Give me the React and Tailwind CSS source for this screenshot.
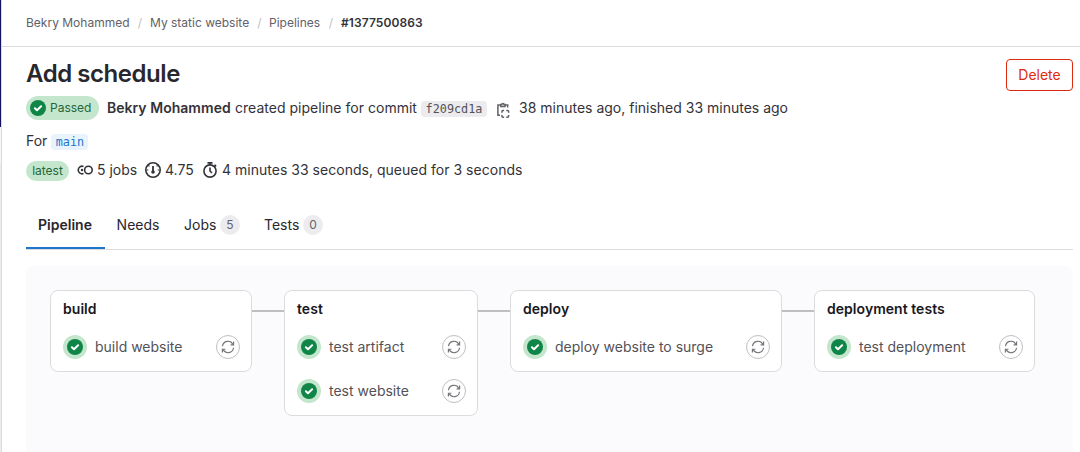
const font = "font-['Inter','Liberation_Sans',sans-serif]";

function Check({ size }) {
  return (
    <svg width={size} height={size} viewBox="0 0 16 16" className="block shrink-0">
      <circle cx="8" cy="8" r="8" fill="#108548" />
      <path d="M4.9 8.2 7 10.2 11.1 6.3" fill="none" stroke="#fff" strokeWidth="2" strokeLinecap="round" strokeLinejoin="round" />
    </svg>
  );
}

function Retry() {
  return (
    <span className="flex h-6 w-6 shrink-0 items-center justify-center rounded-full border border-[#bfbfc3] bg-white">
      <svg width="14" height="14" viewBox="0 0 14 14" fill="none" stroke="#737278" strokeWidth="1.15">
        <path d="M1.5 6.2A5.5 5.5 0 0 1 11.9 4.4" />
        <path d="M12.5 7.8A5.5 5.5 0 0 1 2.1 9.6" />
        <path d="M12.6 1.5v3.3H9.6" />
        <path d="M1.4 12.5V9.2h3" />
      </svg>
    </span>
  );
}

function Stage({ name, jobs, width }) {
  return (
    <section className={`${width} shrink-0 rounded-lg border border-[#dcdcde] bg-white px-3 pt-[7px] pb-3`}>
      <h2 className="h-[22px] text-[14px] leading-[22px] font-semibold tracking-[0.04px] whitespace-nowrap text-[#18171d]">{name}</h2>
      <div className="mt-[15px] flex flex-col gap-5">
        {jobs.map((job) => (
          <div key={job} className="flex h-6 items-center">
            <span className="flex h-6 w-6 shrink-0 items-center justify-center rounded-full bg-[#c3e6cd]">
              <Check size={16} />
            </span>
            <span className="ml-2 flex-1 leading-5 tracking-normal whitespace-nowrap text-[#535158]">{job}</span>
            <span className="-mr-px"><Retry /></span>
          </div>
        ))}
      </div>
    </section>
  );
}

const Connector = ({ width }) => <div className={`${width} mt-5 h-0.5 shrink-0 bg-[#bfbfc3]`} />;

export default function App() {
  return (
    <div className={`${font} flex h-[452px] w-[1080px] overflow-hidden bg-white text-[14px] text-[#333238]`}>
      <aside className="flex w-0.5 shrink-0 flex-col border-r border-[#dcdcde]">
        <div className="h-[127px] bg-[#171162]" />
        <div className="h-9 bg-[#f5f5f8]" />
        <div className="flex-1 bg-[#ececef]" />
      </aside>
      <main className="flex min-w-0 flex-1 flex-col">
        <nav className="flex h-[47px] shrink-0 items-center border-b border-[#dcdcde] pl-6 text-[12px] whitespace-nowrap text-[#626168]">
          <span className="w-[104px]">Bekry Mohammed</span>
          <span className="w-5 text-center text-[#bfbfc3]">/</span>
          <span className="w-[99px]">My static website</span>
          <span className="w-5 pl-px text-center text-[#bfbfc3]">/</span>
          <span className="w-[52px]">Pipelines</span>
          <span className="w-5 text-center text-[#bfbfc3]">/</span>
          <span className="font-semibold tracking-[0.08px] text-[#333238]">#1377500863</span>
        </nav>
        <div className="flex flex-1 flex-col pr-[7px] pl-6">
          <header className="flex h-12 justify-between pt-3">
            <h1 className="text-[24px] leading-[29px] font-semibold tracking-[-0.45px] text-[#28272d]">Add schedule</h1>
            <button className="h-8 w-[67px] rounded border border-[#dd2b0e] text-[14px] leading-[30px] text-[#dd2b0e]">Delete</button>
          </header>
          <div className="flex h-[26px] items-center whitespace-nowrap">
            <span className="flex h-6 w-[73px] items-center gap-1 rounded-full bg-[#c3e6cd] pl-1 text-[12px] text-[#24663b]">
              <Check size={16} />
              <span>Passed</span>
            </span>
            <span className="ml-2 w-[124px] leading-5 font-semibold tracking-[0.03px]">Bekry Mohammed</span>
            <span className="ml-1 w-[182px] leading-5 tracking-[0.02px]">created pipeline for commit</span>
            <code className="mt-0.5 ml-1 flex h-4 w-[66px] items-center justify-center rounded bg-[#ececef] pt-px font-['DejaVu_Sans_Mono',monospace] text-[11.8px] text-[#535158]">f209cd1a</code>
            <svg className="mt-1 ml-2.5 shrink-0" width="13" height="17" viewBox="0 0 13 17" fill="none" stroke="#626168" strokeWidth="1.5">
              <path d="M3.8 3H.9v10.3H3M8 3h2.7v2.6" />
              <path d="M3.8 4.4V2.5h1a1.1 1.1 0 0 1 2.2 0h1v1.9z" />
              <path d="M4.9 10.8V9.6q0-1 1-1h1.2M9.3 8.6h1.3q1 0 1 1v1.2M11.6 13v1.3q0 1-1 1H9.3M7.1 15.3H5.9q-1 0-1-1V13" />
            </svg>
            <span className="ml-[9px] leading-5">38 minutes ago, finished 33 minutes ago</span>
          </div>
          <div className="mt-2 flex h-6 items-center">
            <span className="leading-5">For</span>
            <code className="mt-0.5 ml-1 flex h-4 w-[37px] items-center justify-center rounded bg-[#e9f3fc] pt-px font-['DejaVu_Sans_Mono',monospace] text-[11.8px] text-[#1f75cb]">main</code>
          </div>
          <div className="mt-1.5 flex h-6 items-center whitespace-nowrap">
            <span className="flex h-5 w-[43px] items-center justify-center rounded-full bg-[#c3e6cd] text-[12px] text-[#24663b]">latest</span>
            <svg className="-mt-0.5 ml-2 shrink-0" width="16" height="16" viewBox="0 0 16 16" fill="none" stroke="#333238" strokeWidth="1.6">
              <path d="M6.5 4.5A3.8 3.8 0 1 0 6.5 11.5" />
              <circle cx="5" cy="8" r="1.2" fill="#333238" stroke="none" />
              <circle cx="11.4" cy="8" r="3.8" />
            </svg>
            <span className="ml-1 w-10 pb-0.5 leading-5">5 jobs</span>
            <svg className="-mt-0.5 ml-2 shrink-0" width="16" height="16" viewBox="0 0 16 16" fill="none" stroke="#333238" strokeWidth="1.6">
              <circle cx="8" cy="8" r="7.2" />
              <path d="M8 4v6" strokeWidth="1.8" />
              <circle cx="8" cy="10" r="1.8" fill="#333238" stroke="none" />
              <path d="M1.5 8h1.8M12.7 8h1.8M3.3 3.3l1.1 1.1M12.7 3.3l-1.1 1.1" strokeWidth="1.2" />
            </svg>
            <span className="ml-1 w-[29px] pb-0.5 leading-5">4.75</span>
            <svg className="-mt-0.5 ml-2 shrink-0" width="16" height="16" viewBox="0 0 16 16" fill="none" stroke="#333238" strokeWidth="1.6">
              <circle cx="8" cy="9" r="6.1" />
              <path d="M5.5.9h5M8 1v2M12.5 2.8l1.6 1.6M8 5.5V9l2 2" />
            </svg>
            <span className="ml-1 pb-0.5 leading-5 tracking-[0.02px]">4 minutes 33 seconds, queued for 3 seconds</span>
          </div>
          <div className="mt-[19px] flex h-12 shrink-0 border-b border-[#dcdcde] whitespace-nowrap text-[#28272d]">
            <div className="flex h-[47px] w-[79px] items-center justify-center border-b-2 border-[#1f75cb] pr-px font-semibold">Pipeline</div>
            <div className="flex h-[45px] w-[67px] items-center justify-center pr-px">Needs</div>
            <div className="flex h-[45px] w-20 items-center pl-3">
              <span className="w-9">Jobs</span>
              <span className="flex h-5 w-5 items-center justify-center rounded-full bg-[#ececef] text-[12px] text-[#626168]">5</span>
            </div>
            <div className="flex h-[45px] items-center pl-3">
              <span className="w-[39px]">Tests</span>
              <span className="flex h-5 w-5 items-center justify-center rounded-full bg-[#ececef] text-[12px] text-[#626168]">0</span>
            </div>
          </div>
          <div className="mt-4 flex flex-1 items-start rounded-t-lg bg-[#fbfafd] pt-6 pl-6">
            <Stage name="build" jobs={["build website"]} width="w-[202px]" />
            <Connector width="w-8" />
            <Stage name="test" jobs={["test artifact", "test website"]} width="w-[194px]" />
            <Connector width="w-8" />
            <Stage name="deploy" jobs={["deploy website to surge"]} width="w-[272px]" />
            <Connector width="w-8" />
            <Stage name="deployment tests" jobs={["test deployment"]} width="w-[221px]" />
          </div>
        </div>
      </main>
    </div>
  );
}
